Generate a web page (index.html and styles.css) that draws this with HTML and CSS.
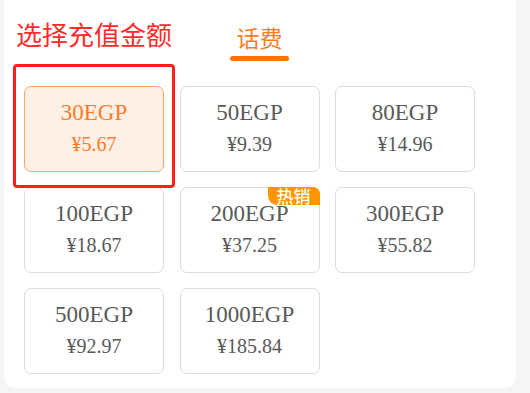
FILE: index.html
```html
<!DOCTYPE html>
<html lang="zh">
<head>
<meta charset="utf-8">
<link rel="stylesheet" href="styles.css">
</head>
<body>
<div class="panel">
  <div class="header">
    <div class="title">选择充值金额</div>
    <div class="tab">
      <span class="tab-label">话费</span>
      <span class="tab-line"></span>
    </div>
  </div>
  <div class="grid">
    <div class="card selected"><div class="name">30EGP</div><div class="price">¥5.67</div></div>
    <div class="card"><div class="name">50EGP</div><div class="price">¥9.39</div></div>
    <div class="card"><div class="name">80EGP</div><div class="price">¥14.96</div></div>
    <div class="card"><div class="name">100EGP</div><div class="price">¥18.67</div></div>
    <div class="card"><div class="name">200EGP</div><div class="price">¥37.25</div><span class="badge">热销</span></div>
    <div class="card"><div class="name">300EGP</div><div class="price">¥55.82</div></div>
    <div class="card"><div class="name">500EGP</div><div class="price">¥92.97</div></div>
    <div class="card"><div class="name">1000EGP</div><div class="price">¥185.84</div></div>
  </div>
  <div class="highlight"></div>
</div>
</body>
</html>
```
FILE: styles.css
```css
html, body {
  margin: 0;
  padding: 0;
}
body {
  background: #f5f5f5;
  width: 530px;
  height: 393px;
  overflow: hidden;
}
.panel {
  position: relative;
  margin-left: 4px;
  width: 512px;
  height: 388px;
  background: #fff;
  border-radius: 0 0 12px 12px;
  box-sizing: border-box;
}
.header {
  display: flex;
  align-items: flex-start;
  height: 86px;
  box-sizing: border-box;
  padding-top: 20px;
  padding-left: 12px;
}
.title {
  font-family: "Noto Sans CJK SC", sans-serif;
  font-size: 26px;
  line-height: 28px;
  color: #ff2b2b;
}
.tab {
  margin-left: 58px;
  display: flex;
  flex-direction: column;
  align-items: center;
  padding-top: 5px;
  width: 59px;
}
.tab-label {
  font-family: "Noto Sans CJK SC", sans-serif;
  font-size: 23px;
  line-height: 24px;
  color: #ff7a1a;
}
.tab-line {
  display: block;
  margin-top: 7px;
  width: 59px;
  height: 5px;
  border-radius: 3px;
  background: #ff7300;
}
.grid {
  display: grid;
  grid-template-columns: repeat(3, 140px);
  grid-auto-rows: 86px;
  column-gap: 15.5px;
  row-gap: 15px;
  padding-left: 20px;
}
.card {
  position: relative;
  border: 1px solid #dcdcdc;
  border-radius: 7px;
  box-sizing: border-box;
  display: flex;
  flex-direction: column;
  align-items: center;
  justify-content: center;
  font-family: "Liberation Serif", serif;
  color: #595959;
  padding-bottom: 1px;
}
.name {
  font-size: 23px;
  line-height: 30px;
}
.price {
  font-size: 20px;
  line-height: 30px;
  margin-top: 1px;
}
.card.selected {
  background: #fff0e6;
  border-color: #ffa76b;
  color: #ff7a2a;
}
.badge {
  position: absolute;
  top: -1px;
  right: -1px;
  width: 52px;
  height: 18px;
  background: #ff9500;
  border-radius: 0 7px 0 9px;
  color: #fff;
  font-family: "Noto Sans CJK SC", sans-serif;
  font-size: 17px;
  font-weight: 500;
  line-height: 18px;
  text-align: center;
}
.highlight {
  position: absolute;
  left: 9px;
  top: 64px;
  width: 162px;
  height: 124px;
  box-sizing: border-box;
  border: 3px solid #ff1f1f;
  border-radius: 4px;
}
```
